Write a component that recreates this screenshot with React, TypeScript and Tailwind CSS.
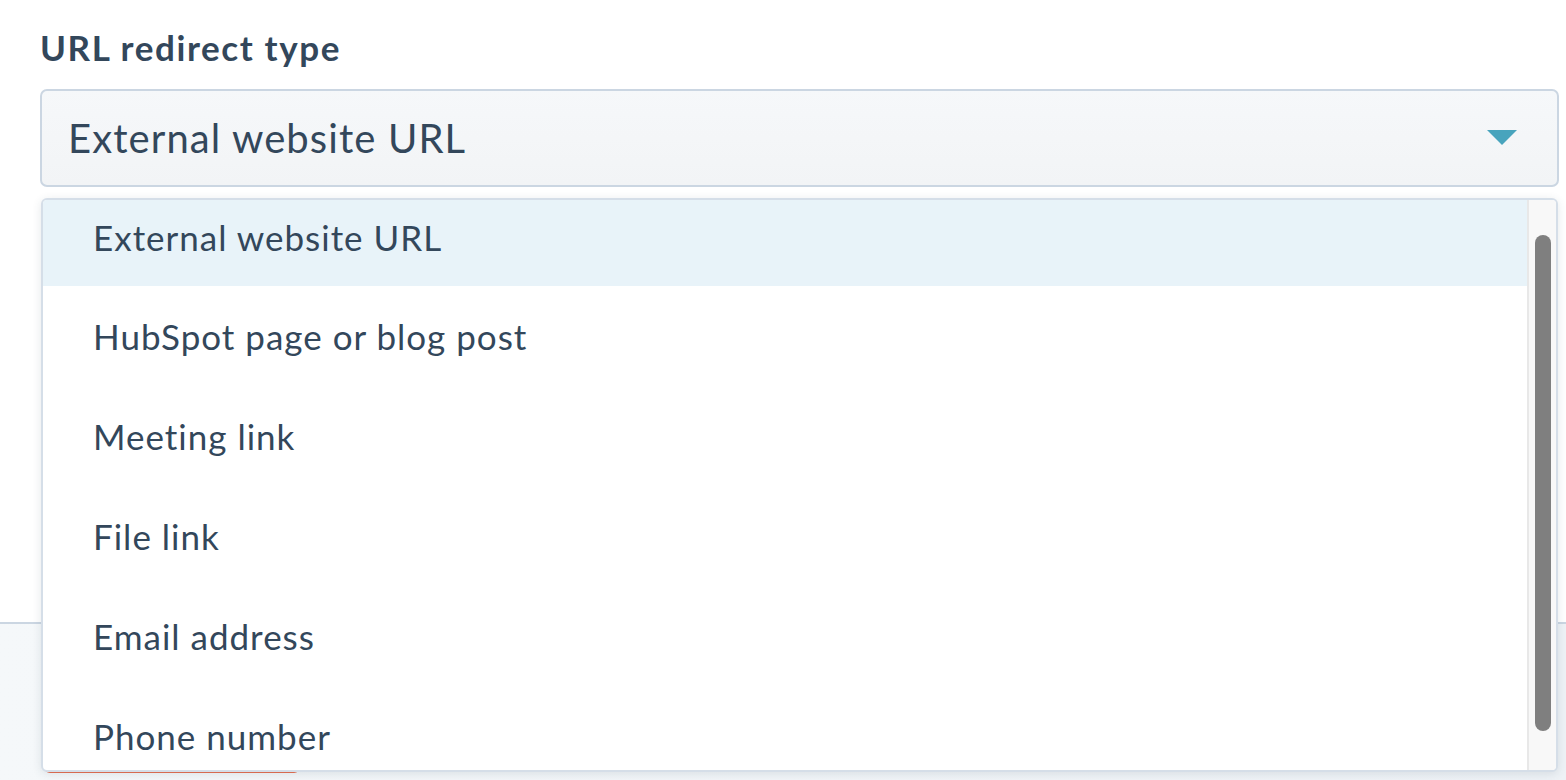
import React from "react";

const items = [
  "External website URL",
  "HubSpot page or blog post",
  "Meeting link",
  "File link",
  "Email address",
  "Phone number",
];

export default function App() {
  return (
    <div
      className="relative h-[780px] w-full overflow-hidden bg-white flex flex-col text-[#33475b]"
      style={{ fontFamily: "Lato, 'Noto Sans', sans-serif" }}
    >
      <div className="flex-none h-[622px] pl-[40px] pt-[25px]">
        <div className="text-[35px] leading-[44px] font-bold tracking-[1.6px]">URL redirect type</div>
        <div className="relative mt-[20px] w-[1519px]">
          <div className="h-[98px] rounded-[7px] border-2 border-[#cbd6e2] bg-gradient-to-b from-[#f6f8fa] to-[#f2f4f6] flex items-center justify-between pl-[26px] pr-[40px]">
            <span className="text-[40px] leading-none tracking-[1.1px]">External website URL</span>
            <svg width="30" height="16" viewBox="0 0 30 16">
              <polygon points="0,0 30,0 15,15" fill="#48a4bd" />
            </svg>
          </div>
          <div className="absolute left-[1px] right-[1px] top-[109px] h-[574px] z-10 rounded-[6px] border-2 border-[#d5dee8] bg-white shadow-[0_2px_10px_rgba(45,62,80,0.12)] flex overflow-hidden">
            <div className="flex-1 flex flex-col">
              {items.map((t, i) => (
                <div
                  key={t}
                  className={
                    i === 0
                      ? "h-[86px] flex-none flex items-center pl-[50px] pb-[12px] bg-[#e8f3f9] text-[35px] tracking-[1px]"
                      : "h-[100px] flex-none flex items-center pl-[50px] text-[35px] tracking-[1px]"
                  }
                >
                  {t}
                </div>
              ))}
            </div>
            <div className="w-[29px] flex-none bg-[#f8f8f8] border-l-2 border-[#e8e8e8] pt-[35px] pl-[6px]">
              <div className="w-[16px] h-[496px] rounded-full bg-[#7f7f7f]" />
            </div>
          </div>
        </div>
      </div>
      <div className="flex-1 border-t-2 border-[#cbd6e2] bg-gradient-to-r from-[#f5f8fa] to-[#eef2f6] pl-[44px] pt-[70px]">
        <div className="w-[256px] h-[79px] rounded-[6px] border-2 border-[#e66e50] bg-white" />
      </div>
    </div>
  );
}
